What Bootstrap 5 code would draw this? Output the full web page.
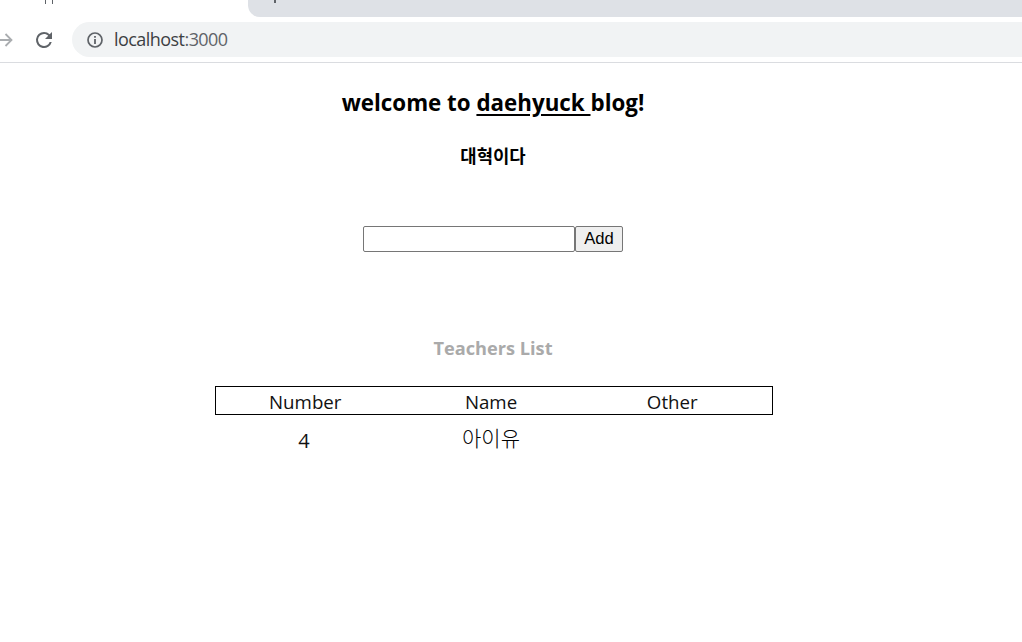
<!DOCTYPE html>
<html lang="ko">
<head>
<meta charset="utf-8">
<title>localhost:3000</title>
<link href="https://cdn.jsdelivr.net/npm/bootstrap@5.3.0/dist/css/bootstrap.min.css" rel="stylesheet">
<style>
html,body{height:100%;overflow:hidden}
body{background:#fff;color:#000;font-family:"Open Sans","Noto Sans CJK KR",sans-serif}
.chrome-top{height:63px;border-bottom:1px solid #dadce0;overflow:hidden}
.tab-strip{height:17px}
.tab-active{width:248px;position:relative}
.tab-rest{background:#dee1e6;border-bottom-left-radius:12px}
.tab-tick{position:absolute;background:#5f6368}
.toolbar{height:35px;margin-top:5px}
.nav-slot{width:26px}
.nav-reload{margin-left:5px}
.omni{background:#f1f3f4;border-radius:18px 0 0 18px;margin-left:15px;padding-left:14px;font-size:18px;color:#3c4043;font-family:"Open Sans",sans-serif;letter-spacing:-.55px;gap:10px}
.omni-port{color:#5f6368}
.page-main{width:986px;text-align:center}
.blog-title{font-size:22.35px;font-weight:700;line-height:30px;margin:25px 0 0}
.blog-title u{text-underline-offset:3px}
.blog-sub{font-size:17.8px;font-weight:700;line-height:24px;margin:26px 0 0}
.add-form{margin-top:58px;height:26px}
.add-input{width:212px;height:26px;border:1px solid #767676;border-radius:2px;padding:1px 2px;background:#fff}
.add-btn{width:48px;height:26px;border:1px solid #767676;border-radius:2px;background:#efefef;padding:0;font:16.6px/1 "Liberation Sans",Arial,sans-serif;color:#000}
.list-title{font-size:18.2px;font-weight:700;color:#aaa;line-height:26px;margin:83px 0 0}
.teacher-table{width:558px;margin:25px 0 0 215px;border-collapse:collapse;table-layout:fixed;font-size:18.7px;color:#111}
.teacher-table th{font-weight:400;height:27px;line-height:25px;padding:2px 0 0}
.teacher-table thead tr{border:1px solid #000}
.teacher-table td{padding:0;height:52px;line-height:52px}
.col-a{width:179px}.col-b{width:193px}
.head-other{padding-right:15px !important}
.cell-num{font-size:20px;line-height:50px !important;padding-right:2px !important}
.cell-han{font-family:"Noto Sans CJK KR",sans-serif;font-size:21px;font-weight:300;color:#000;line-height:44px !important;vertical-align:top}
</style>
</head>
<body>
<header class="chrome-top">
  <div class="tab-strip d-flex">
    <div class="tab-active"><span class="tab-tick" style="left:45px;top:0;width:1px;height:4px"></span><span class="tab-tick" style="left:52px;top:0;width:1px;height:4px"></span></div>
    <div class="tab-rest flex-grow-1 position-relative"><span class="tab-tick" style="left:26px;top:0;width:2px;height:3px"></span></div>
  </div>
  <div class="toolbar d-flex align-items-center">
    <div class="nav-slot">
      <svg width="14" height="18" viewBox="0 0 14 18" class="d-block" style="margin-left:-1px"><path d="M0 9H12M6.5 3L12.5 9L6.5 15" fill="none" stroke="#aaadb0" stroke-width="1.8"/></svg>
    </div>
    <div class="nav-slot nav-reload d-flex justify-content-center">
      <svg width="24" height="24" viewBox="0 0 24 24" class="d-block"><path fill="#5f6368" d="M17.65 6.35A7.96 7.96 0 0 0 12 4a8 8 0 1 0 7.73 10h-2.08A6 6 0 1 1 12 6c1.66 0 3.14.69 4.22 1.78L13 11h7V4l-2.35 2.35z"/></svg>
    </div>
    <div class="omni flex-grow-1 h-100 d-flex align-items-center">
      <svg width="18" height="18" viewBox="0 0 18 18" class="flex-shrink-0"><circle cx="9" cy="9" r="7" fill="none" stroke="#5f6368" stroke-width="1.7"/><path d="M8.1 8h1.8v5H8.1zM8.1 5h1.8v1.8H8.1z" fill="#5f6368"/></svg>
      <span>localhost<span class="omni-port">:3000</span></span>
    </div>
  </div>
</header>
<main class="page-main">
  <h1 class="blog-title">welcome to <u>daehyuck </u>blog!</h1>
  <p class="blog-sub">대혁이다</p>
  <form class="add-form d-flex justify-content-center"><input class="add-input" type="text" aria-label="teacher"><button class="add-btn" type="button">Add</button></form>
  <h2 class="list-title">Teachers List</h2>
  <table class="teacher-table">
    <colgroup><col class="col-a"><col class="col-b"><col></colgroup>
    <thead><tr><th>Number</th><th>Name</th><th class="head-other">Other</th></tr></thead>
    <tbody><tr><td class="cell-num">4</td><td class="cell-han">아이유</td><td></td></tr></tbody>
  </table>
</main>
<script src="https://cdn.jsdelivr.net/npm/bootstrap@5.3.0/dist/js/bootstrap.bundle.min.js"></script>
</body>
</html>
